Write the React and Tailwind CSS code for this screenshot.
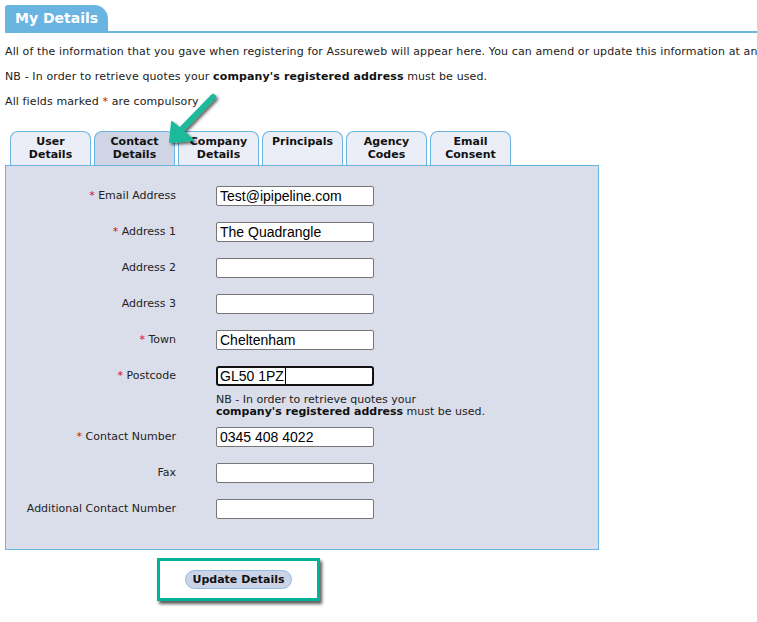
import React from "react";

const tabs = [
  { label: ["User", "Details"] },
  { label: ["Contact", "Details"], active: true },
  { label: ["Company", "Details"] },
  { label: ["Principals"] },
  { label: ["Agency", "Codes"] },
  { label: ["Email", "Consent"] },
];

function Label({ req, children }) {
  return (
    <div className="w-[170px] shrink-0 text-right leading-[14px]">
      {req && <span className="text-[#d01010]">* </span>}
      {children}
    </div>
  );
}

function Field({ value = "", focused }) {
  if (focused) {
    return (
      <div className="relative w-[158px] h-[20px] bg-white border-2 border-[#111] rounded-[3px] flex items-center pl-[2px] font-['Liberation_Sans'] text-[14px] text-black">
        <span>{value}</span>
        <span className="inline-block w-px h-[16px] bg-black ml-[1px]"></span>
      </div>
    );
  }
  return (
    <input
      readOnly
      value={value}
      className="w-[158px] h-[20px] bg-white border border-[#767676] rounded-[2px] px-[3px] font-['Liberation_Sans'] text-[14px] text-black outline-none"
    />
  );
}

function Row({ label, req, value, focused, className = "" }) {
  return (
    <div className={"flex items-center gap-[40px] " + className}>
      <Label req={req}>{label}</Label>
      <Field value={value} focused={focused} />
    </div>
  );
}

export default function App() {
  return (
    <div className="relative w-[757px] h-[622px] bg-white overflow-hidden font-['DejaVu_Sans',_Verdana,_sans-serif] text-[11px] text-[#222]">
      {/* header */}
      <div className="pt-[5px] pl-[5px]">
        <div className="flex items-end border-b-2 border-[#6ab4e2]">
          <div className="bg-[#6ab4e2] text-white font-bold text-[14px] pl-[10px] pr-[10px] h-[26px] rounded-tr-[14px] rounded-tl-[3px] flex items-center">
            My Details
          </div>
        </div>
      </div>

      {/* intro */}
      <div className="mt-[6px] px-[5px] whitespace-nowrap">
        <p className="leading-[25px] tracking-[0.12px]">
          All of the information that you gave when registering for Assureweb will appear here. You can amend or update this information at any time.
        </p>
        <p className="leading-[25px] tracking-[0.12px]">
          NB - In order to retrieve quotes your <b className="text-[#111]">company's registered address</b> must be used.
        </p>
        <p className="leading-[25px] tracking-[0.12px]">
          All fields marked <span className="text-[#d01010]">*</span> are compulsory
        </p>
      </div>

      {/* tabs */}
      <div className="mt-[17px] pl-[10px] flex gap-[3px] items-end">
        {tabs.map((t, i) => (
          <div
            key={i}
            className={
              "w-[81px] h-[34px] rounded-t-[8px] border border-b-0 border-[#6ab4e2] text-center font-bold text-[#111] leading-[13px] pt-[3px] " +
              (t.active ? "bg-[#cfd5e4]" : "bg-[#ebeef7]")
            }
          >
            {t.label.map((l, j) => (
              <div key={j}>{l}</div>
            ))}
          </div>
        ))}
      </div>

      {/* panel */}
      <div className="ml-[5px] w-[594px] bg-[#dadeeb] border border-[#6ab4e2] pt-[20px] pb-[30px]">
        <div className="flex flex-col gap-[16px]">
          <Row req label="Email Address" value="Test@ipipeline.com" />
          <Row req label="Address 1" value="The Quadrangle" />
          <Row label="Address 2" />
          <Row label="Address 3" />
          <Row req label="Town" value="Cheltenham" />
          <div>
            <Row req label="Postcode" value="GL50 1PZ" focused />
            <div className="ml-[210px] mt-[8px] leading-[12px] text-[#222]">
              <div>NB - In order to retrieve quotes your</div>
              <div>
                <b className="text-[#111]">company's registered address</b> must be used.
              </div>
            </div>
          </div>
          <Row req label="Contact Number" value="0345 408 4022" className="-mt-[7px]" />
          <Row label="Fax" />
          <Row label="Additional Contact Number" />
        </div>
      </div>

      {/* button area */}
      <div className="ml-[157px] mt-[8px] w-[163px] h-[43px] border-[3px] border-[#00b398] shadow-[2px_3px_3px_rgba(0,0,0,0.65)] pl-[25px] pt-[9px]">
        <button className="w-[107px] h-[19px] rounded-full bg-[#cdd3e6] border border-[#8fbde6] font-bold text-[11px] text-[#111] leading-[17px]">
          Update Details
        </button>
      </div>

      {/* arrow annotation */}
      <svg
        className="absolute left-0 top-0 pointer-events-none"
        width="757"
        height="622"
        viewBox="0 0 757 622"
      >
        <defs>
          <filter id="sh" x="-50%" y="-50%" width="200%" height="200%">
            <feDropShadow dx="2" dy="2" stdDeviation="1.5" floodColor="#000" floodOpacity="0.6" />
          </filter>
        </defs>
        <g filter="url(#sh)" fill="#1bb99a" stroke="none">
          <line x1="213" y1="97" x2="180" y2="131" stroke="#1bb99a" strokeWidth="6" strokeLinecap="round" />
          <polygon points="170,142 172,122 193,140" strokeLinejoin="round" stroke="#1bb99a" strokeWidth="2" />
        </g>
      </svg>
    </div>
  );
}
